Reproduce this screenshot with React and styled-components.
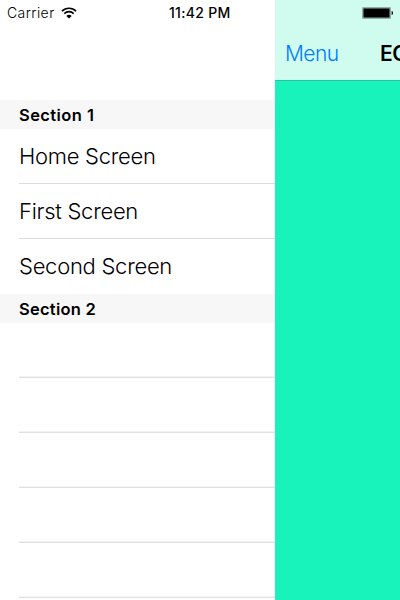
import React from "react";
import styled, { createGlobalStyle } from "styled-components";

const GlobalStyle = createGlobalStyle`
  body { margin: 0; background: #fff; overflow: hidden; }
`;

const Screen = styled.div`
  display: grid;
  grid-template-columns: 275px 125px;
  width: 400px;
  height: 600px;
  overflow: hidden;
  background: #fff;
  color: #000;
  font-family: Inter, "Liberation Sans", sans-serif;
`;

const Drawer = styled.aside`
  display: flex;
  flex-direction: column;
  min-width: 0;
  height: 600px;
  overflow: hidden;
`;

const StatusBar = styled.div`
  display: flex;
  flex: none;
  align-items: center;
  box-sizing: border-box;
  height: 25px;
  padding-left: 7px;
  margin-bottom: 75px;
`;

const Carrier = styled.span`
  width: 54px;
  font-size: 14px;
  font-weight: 300;
  letter-spacing: 0.42px;
  white-space: nowrap;
`;

const Clock = styled.span`
  margin-left: 92px;
  font-size: 14px;
  font-weight: 500;
  letter-spacing: 0.3px;
  white-space: nowrap;
`;

const WifiIcon = styled.svg`
  flex: none;
  width: 16px;
  height: 12px;
`;

const SectionHeader = styled.h2`
  flex: none;
  box-sizing: border-box;
  height: 29px;
  margin: 0;
  padding-left: 19px;
  background: #f7f7f7;
  font-size: 16.5px;
  font-weight: 600;
  line-height: 30px;
  letter-spacing: ${(p) => p.$tracking}px;
`;

const List = styled.ul`
  flex: none;
  margin: 0;
  padding: 0 0 0 19px;
  list-style: none;
`;

const Row = styled.li`
  box-sizing: border-box;
  height: 55px;
  border-bottom: 1px solid ${(p) => (p.$last ? "transparent" : "#dcdcde")};
  font-size: 22px;
  font-weight: 300;
  line-height: 55px;
  letter-spacing: -0.27px;
  white-space: nowrap;
`;

const EmptyRow = styled(Row)`
  border-bottom-color: #e0e0e2;
  box-shadow: inset 0 -1px #f2f2f3;
`;

const Content = styled.main`
  display: flex;
  flex-direction: column;
  min-width: 0;
  overflow: hidden;
  background: #18f3bc;
`;

const NavBar = styled.header`
  flex: none;
  box-sizing: border-box;
  height: 81px;
  background: #d0fcf0;
  border-bottom: 1px solid #28c59d;
`;

const BatteryStrip = styled.div`
  display: flex;
  align-items: center;
  justify-content: flex-end;
  height: 26px;
  padding-right: 7px;
`;

const NavItems = styled.div`
  display: flex;
  align-items: center;
  height: 54px;
  padding-left: 10px;
  white-space: nowrap;
`;

const MenuButton = styled.button`
  flex: none;
  width: 95px;
  padding: 0;
  border: 0;
  background: none;
  color: #007aff;
  font: 300 21px Inter, "Liberation Sans", sans-serif;
  letter-spacing: -0.6px;
  text-align: left;
`;

const Title = styled.h1`
  margin: 0;
  font-size: 21px;
  font-weight: 600;
  letter-spacing: -0.4px;
`;

const rows = ["Home Screen", "First Screen", "Second Screen"];
const emptyRows = [0, 1, 2, 3, 4];

export default function App() {
  return (
    <>
      <GlobalStyle />
      <Screen>
        <Drawer>
          <StatusBar>
            <Carrier>Carrier</Carrier>
            <WifiIcon viewBox="0 0 16 12">
              <path d="M.9 4.1a10.1 10.1 0 0 1 14.2 0" fill="none" stroke="#000" strokeWidth="1.6" />
              <path d="M3.3 6.6a6.7 6.7 0 0 1 9.4 0" fill="none" stroke="#000" strokeWidth="1.6" />
              <path d="M5.3 8.9a4.1 4.1 0 0 1 5.4 0L8 11.6z" />
            </WifiIcon>
            <Clock>11:42 PM</Clock>
          </StatusBar>
          <SectionHeader $tracking={0.42}>Section 1</SectionHeader>
          <List>
            {rows.map((label, i) => (
              <Row key={label} $last={i === rows.length - 1}>
                {label}
              </Row>
            ))}
          </List>
          <SectionHeader $tracking={0.25}>Section 2</SectionHeader>
          <List>
            {emptyRows.map((i) => (
              <EmptyRow key={i} />
            ))}
          </List>
        </Drawer>
        <Content>
          <NavBar>
            <BatteryStrip>
              <svg width="31" height="12" viewBox="0 0 31 12">
                <rect x="0" y="0" width="29" height="12" rx="1.2" fill="#8eb0a6" />
                <rect x="1.5" y="1.5" width="26" height="9" fill="#000" />
                <path d="M29.6 4h.4q1 .6 1 2t-1 2h-.4z" />
              </svg>
            </BatteryStrip>
            <NavItems>
              <MenuButton>Menu</MenuButton>
              <Title>EC</Title>
            </NavItems>
          </NavBar>
        </Content>
      </Screen>
    </>
  );
}
